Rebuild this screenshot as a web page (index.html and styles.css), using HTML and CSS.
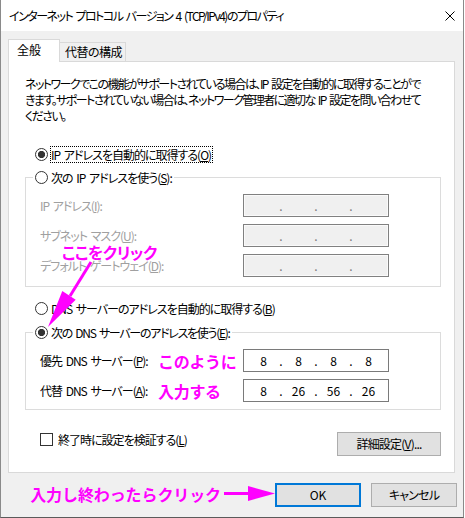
FILE: index.html
```html
<!DOCTYPE html>
<html lang="ja">
<head>
<meta charset="utf-8">
<title>インターネット プロトコル バージョン 4 (TCP/IPv4)のプロパティ</title>
<link rel="stylesheet" href="styles.css">
</head>
<body>
<div class="window">
  <div class="titlebar">
    <span class="title">インターネット プロトコル バージョン 4 (TCP/IPv4)のプロパティ</span>
    <svg class="close" width="10" height="10" viewBox="0 0 10 10"><path d="M0.5 0.5L9.5 9.5M9.5 0.5L0.5 9.5" stroke="#000" stroke-width="1" fill="none"/></svg>
  </div>
  <div class="client">
    <div class="tabs">
      <div class="tab active">全般</div>
      <div class="tab alt">代替の構成</div>
    </div>
    <div class="panel">
      <p class="desc">ネットワークでこの機能がサポートされている場合は、IP 設定を自動的に取得することがで<br>きます。サポートされていない場合は、ネットワーク管理者に適切な IP 設定を問い合わせて<br>ください。</p>

      <div class="radio-row first"><span class="radio checked"></span><span class="focus">IP アドレスを自動的に取得する(<u>O</u>)</span></div>

      <fieldset class="group g-ip">
        <legend><span class="radio"></span><span class="rtext">次の IP アドレスを使う(<u>S</u>):</span></legend>
        <div class="rows">
          <div class="row"><span class="label wide disabled">IP アドレス(<u>I</u>):</span><div class="ipbox off"><span class="seg"></span><span class="dot">.</span><span class="seg"></span><span class="dot">.</span><span class="seg"></span><span class="dot">.</span><span class="seg"></span></div></div>
          <div class="row"><span class="label wide disabled">サブネット マスク(<u>U</u>):</span><div class="ipbox off"><span class="seg"></span><span class="dot">.</span><span class="seg"></span><span class="dot">.</span><span class="seg"></span><span class="dot">.</span><span class="seg"></span></div></div>
          <div class="row"><span class="label wide disabled">デフォルト ゲートウェイ(<u>D</u>):</span><div class="ipbox off"><span class="seg"></span><span class="dot">.</span><span class="seg"></span><span class="dot">.</span><span class="seg"></span><span class="dot">.</span><span class="seg"></span></div></div>
        </div>
      </fieldset>

      <div class="radio-row dns-auto"><span class="radio"></span><span class="rtext">DNS サーバーのアドレスを自動的に取得する(<u>B</u>)</span></div>

      <fieldset class="group g-dns">
        <legend><span class="radio checked"></span><span class="rtext">次の DNS サーバーのアドレスを使う(<u>E</u>):</span></legend>
        <div class="rows">
          <div class="row"><span class="label">優先 DNS サーバー(<u>P</u>):</span><span class="note">このように</span><div class="ipbox"><span class="seg">8</span><span class="dot">.</span><span class="seg">8</span><span class="dot">.</span><span class="seg">8</span><span class="dot">.</span><span class="seg">8</span></div></div>
          <div class="row"><span class="label">代替 DNS サーバー(<u>A</u>):</span><span class="note">入力する</span><div class="ipbox"><span class="seg">8</span><span class="dot">.</span><span class="seg">26</span><span class="dot">.</span><span class="seg">56</span><span class="dot">.</span><span class="seg">26</span></div></div>
        </div>
      </fieldset>

      <div class="bottom-row">
        <div class="check"><span class="checkbox"></span><span>終了時に設定を検証する(<u>L</u>)</span></div>
        <button class="btn adv">詳細設定(<u>V</u>)...</button>
      </div>
    </div>

    <div class="actions">
      <span class="note big">入力し終わったらクリック</span>
      <svg class="arrow-right" width="52" height="24" viewBox="0 0 52 24"><rect x="1" y="9" width="26" height="3" fill="#ff00ff"/><polygon points="25,3 25,18 52,10.5" fill="#ff00ff"/></svg>
      <button class="btn ok">OK</button>
      <button class="btn cancel">キャンセル</button>
    </div>
  </div>

  <div class="callout">ここをクリック</div>
  <svg class="pointer" width="465" height="518" viewBox="0 0 465 518">
    <line x1="91" y1="262" x2="70" y2="296" stroke="#ff00ff" stroke-width="3"/>
    <polygon points="48,327 75.7,299.7 62.3,290.9" fill="#ff00ff"/>
  </svg>
</div>
</body>
</html>
```

FILE: styles.css
```css
* {
  box-sizing: border-box;
}

html,
body {
  margin: 0;
  padding: 0;
  background: #fff;
}

body {
  width: 465px;
  height: 518px;
  overflow: hidden;
  font-family: "Noto Sans CJK JP", "Noto Sans", sans-serif;
  font-size: 12px;
  letter-spacing: -1px;
  word-spacing: 2px;
  color: #000;
  font-feature-settings: "palt";
}

.window {
  position: relative;
  width: 464px;
  height: 518px;
  border: 1px solid #8a8a8a;
  border-top: 0;
  border-bottom-color: #5a5a5a;
  background: #f0f0f0;
  display: flex;
  flex-direction: column;
}

.titlebar {
  height: 31px;
  flex: none;
  background: #fff;
  display: flex;
  align-items: center;
  padding-left: 8px;
}

.title {
  line-height: 16px;
  white-space: nowrap;
  letter-spacing: -1.5px;
}

.close {
  margin-left: auto;
  margin-right: 8px;
}

.client {
  flex: 1;
  padding: 8px 8px 8px 7px;
  display: flex;
  flex-direction: column;
}

.tabs {
  height: 22px;
  display: flex;
  align-items: flex-end;
}

.tab {
  border: 1px solid #d9d9d9;
  border-bottom: 0;
  background: #f0f0f0;
  white-space: nowrap;
}

.tab.active {
  width: 52px;
  height: 23px;
  margin-bottom: -1px;
  background: #fff;
  position: relative;
  z-index: 1;
  padding-left: 8px;
  line-height: 20px;
  letter-spacing: 0;
}

.tab.alt {
  width: 67px;
  height: 19px;
  margin-left: -1px;
  padding-left: 5px;
  line-height: 18px;
  letter-spacing: -0.5px;
}

.panel {
  background: #fff;
  border: 1px solid #d9d9d9;
  padding: 0 0 16px;
  display: flex;
  flex-direction: column;
}

.desc {
  margin: 0;
  padding: 14px 16px 0;
  line-height: 16px;
  letter-spacing: -1.55px;
  white-space: nowrap;
}

.radio-row {
  height: 17px;
  line-height: 17px;
  padding-left: 26px;
  display: flex;
  align-items: center;
  white-space: nowrap;
}

.radio-row.first {
  margin-top: 22px;
}

.radio-row.dns-auto {
  margin-top: 13px;
}

.radio {
  display: inline-block;
  flex: none;
  width: 13px;
  height: 13px;
  border: 1px solid #333;
  border-radius: 50%;
  background: #fff;
}

.radio.checked {
  background: radial-gradient(circle, #333 0, #333 3.3px, #fff 3.9px);
}

.rtext {
  margin-left: 3px;
}

.g-dns legend .rtext {
  letter-spacing: -1.3px;
}

.focus {
  margin-left: 3px;
  padding-right: 1px;
  line-height: 15px;
  outline: 1px dotted #000;
  outline-offset: 0;
}

.group {
  margin: 6px 13px 0 16px;
  padding: 8px 51px 9px 7px;
  border: 1px solid #dcdcdc;
  min-width: 0;
}

.group.g-dns {
  margin-top: 7px;
  padding-bottom: 7px;
}

.group legend {
  padding: 0 2px;
  height: 17px;
  line-height: 17px;
  display: flex;
  align-items: center;
  white-space: nowrap;
}

.rows {
  display: flex;
  flex-direction: column;
  gap: 7px;
  padding-left: 7px;
}

.row {
  display: grid;
  grid-template-columns: 118px 1fr 146px;
  align-items: center;
  height: 23px;
}

.label {
  white-space: nowrap;
  line-height: 17px;
}

.label.wide {
  grid-column: 1 / 3;
}

.disabled {
  color: #a0a0a0;
}

.note {
  color: #ff00ff;
  font-weight: 700;
  font-size: 16px;
  line-height: 20px;
  letter-spacing: -0.3px;
  word-spacing: 0;
  font-feature-settings: normal;
  white-space: nowrap;
}

.ipbox {
  grid-column: 3;
  height: 23px;
  border: 1px solid #7a7a7a;
  background: #fff;
  display: flex;
  align-items: center;
  padding: 0 4px;
  line-height: 17px;
  letter-spacing: 0;
}

.ipbox.off {
  background: #f0f0f0;
  border-color: #808080;
  box-shadow: inset 0 0 0 1px #fafafa;
}

.ipbox.off .dot {
  color: #7a7a7a;
}

.seg {
  width: 31px;
  text-align: center;
}

.dot {
  width: 4px;
  text-align: center;
}

.bottom-row {
  margin: 22px 13px 0 0;
  padding-left: 31px;
  display: flex;
  align-items: flex-start;
}

.check {
  display: flex;
  align-items: center;
  line-height: 15px;
  white-space: nowrap;
}

.checkbox {
  width: 13px;
  height: 13px;
  border: 1px solid #333;
  background: #fff;
  margin-right: 5px;
}

.btn {
  font: inherit;
  font-feature-settings: "palt";
  letter-spacing: -0.8px;
  color: #000;
  background: #e1e1e1;
  border: 1px solid #adadad;
  height: 24px;
  padding: 0;
  line-height: 20px;
  white-space: nowrap;
}

.adv {
  width: 104px;
  margin-left: auto;
}

.actions {
  margin-top: 10px;
  margin-right: -2px;
  display: flex;
  align-items: center;
  justify-content: flex-end;
}

.note.big {
  margin-right: 2px;
  margin-top: -3px;
  letter-spacing: -0.1px;
}

.arrow-right {
  flex: none;
}

.ok {
  width: 86px;
  border: 2px solid #0078d7;
  letter-spacing: 0;
}

.cancel {
  width: 86px;
  margin-left: 10px;
}

.callout {
  position: absolute;
  left: 61px;
  top: 242px;
  color: #ff00ff;
  font-weight: 700;
  font-size: 16px;
  line-height: 20px;
  letter-spacing: -0.5px;
  white-space: nowrap;
}

.pointer {
  position: absolute;
  left: -1px;
  top: 0;
  pointer-events: none;
}
```
